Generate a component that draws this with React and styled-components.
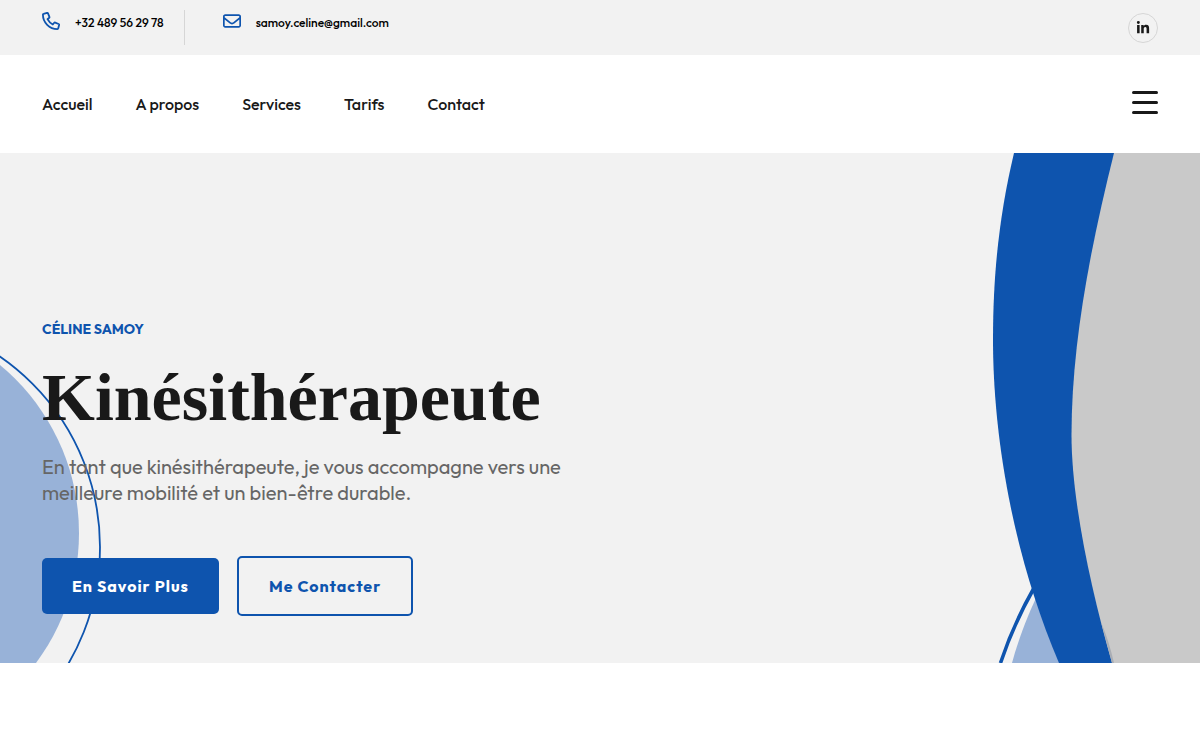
import styled, { createGlobalStyle, ThemeProvider } from 'styled-components';
import { FaLinkedinIn, FaRegEnvelope } from 'react-icons/fa6';

const theme = {
  colors: {
    primary: '#0e54ae',
    primaryLight: '#98b2d8',
    background: '#f2f2f2',
    text: '#191919',
    secondary: '#666666',
    border: '#d6d6d6',
    image: '#c9c9c9',
  },
};

const GlobalStyle = createGlobalStyle`
  * {
    box-sizing: border-box;
  }

  body {
    margin: 0;
    background-color: #ffffff;
    font-family: 'Outfit', 'Lato', sans-serif;
    color: ${theme.colors.text};
  }

  a {
    color: inherit;
    text-decoration: none;
  }
`;

const TopBar = styled.div`
  display: flex;
  justify-content: space-between;
  align-items: center;
  height: 55px;
  padding: 0 42px;
  background-color: ${({ theme }) => theme.colors.background};
`;

const ContactList = styled.ul`
  display: flex;
  list-style: none;
  margin: 0;
  padding: 0;
`;

const ContactItem = styled.li`
  height: 35px;
  padding-top: 2px;
  padding-right: 20px;

  & + & {
    padding-left: 38px;
    border-left: 1px solid ${({ theme }) => theme.colors.border};
  }
`;

const ContactLink = styled.a`
  display: flex;
  align-items: flex-start;
  gap: 15px;
  font-size: 12px;
  font-weight: 500;
  line-height: 22px;
  color: #000000;

  svg {
    color: ${({ theme }) => theme.colors.primary};
  }
`;

const SocialLink = styled.a`
  display: flex;
  align-items: center;
  justify-content: center;
  width: 30px;
  height: 30px;
  border: 1px solid ${({ theme }) => theme.colors.border};
  border-radius: 50%;
`;

const Header = styled.header`
  display: flex;
  justify-content: space-between;
  align-items: center;
  height: 98px;
  padding: 0 42px;
`;

const NavList = styled.ul`
  display: flex;
  gap: 43px;
  list-style: none;
  margin: 0;
  padding: 0;
`;

const NavLink = styled.a`
  font-size: 16px;
  font-weight: 500;
  line-height: 24px;
`;

const MenuButton = styled.button`
  display: flex;
  flex-direction: column;
  gap: 7px;
  width: 26px;
  padding: 0 0 4px;
  border: none;
  background: none;
  cursor: pointer;
`;

const MenuLine = styled.span`
  height: 3px;
  border-radius: 2px;
  background-color: ${({ theme }) => theme.colors.text};
`;

const Hero = styled.section`
  position: relative;
  overflow: hidden;
  padding: 166px 42px 47px;
  background-color: ${({ theme }) => theme.colors.background};
`;

const Shape = styled.svg`
  position: absolute;
  bottom: 0;
  ${({ $side }) => $side}: 0;
`;

const HeroContent = styled.div`
  position: relative;
  max-width: 560px;
`;

const SubTitle = styled.p`
  margin: 0;
  font-size: 14px;
  font-weight: 700;
  line-height: 20px;
  text-transform: uppercase;
  color: ${({ theme }) => theme.colors.primary};
`;

const Title = styled.h1`
  margin: 20px 0 18px;
  font-family: 'Liberation Serif', serif;
  font-size: 68px;
  font-weight: 700;
  line-height: 77px;
`;

const Description = styled.p`
  margin: 0;
  font-size: 20px;
  line-height: 26px;
  color: ${({ theme }) => theme.colors.secondary};
`;

const Actions = styled.div`
  display: flex;
  align-items: center;
  gap: 18px;
  margin-top: 50px;
`;

const Button = styled.button`
  padding: 16px 30px;
  border: ${({ $outline, theme }) =>
    $outline ? `2px solid ${theme.colors.primary}` : 'none'};
  border-radius: 5px;
  background-color: ${({ $outline, theme }) =>
    $outline ? 'transparent' : theme.colors.primary};
  color: ${({ $outline, theme }) => ($outline ? theme.colors.primary : '#ffffff')};
  font-family: inherit;
  font-size: 16px;
  font-weight: 700;
  line-height: 24px;
  letter-spacing: 1px;
  cursor: pointer;
`;

const PhoneIcon = () => (
  <svg width="18" height="18" viewBox="0 0 18 18" fill="none" stroke="currentColor" strokeWidth="1.8" strokeLinejoin="round">
    <path d="M1.6 1.8 5 .9a.9.9 0 0 1 1 .5l1.4 3.4a.9.9 0 0 1-.2 1L5.5 7.2a12.5 12.5 0 0 0 5.3 5.3l1.4-1.7a.9.9 0 0 1 1-.2l3.4 1.4a.9.9 0 0 1 .5 1l-.9 3.4a.9.9 0 0 1-.8.7A14.5 14.5 0 0 1 .9 2.6a.9.9 0 0 1 .7-.8Z" />
  </svg>
);

const navItems = [
  { id: 'accueil', label: 'Accueil' },
  { id: 'a-propos', label: 'A propos' },
  { id: 'services', label: 'Services' },
  { id: 'tarifs', label: 'Tarifs' },
  { id: 'contact', label: 'Contact' },
];

const LeftShape = () => (
  <Shape $side="left" width="110" height="510" viewBox="0 153 110 510" aria-hidden="true">
    <circle cx="-139" cy="533" r="218" fill={theme.colors.primaryLight} />
    <circle cx="-131" cy="547" r="231" fill="none" stroke={theme.colors.primary} strokeWidth="1.8" />
  </Shape>
);

const RightShape = () => (
  <Shape $side="right" width="220" height="510" viewBox="980 153 220 510" aria-hidden="true">
    <path d="M1012 663Q1021 630 1036 598L1070 663Z" fill={theme.colors.primaryLight} />
    <path d="M1000.5 663Q1013 625 1034 588" fill="none" stroke={theme.colors.primary} strokeWidth="3.6" />
    <path
      d="M1014 153C1000 212 993 270 993 340C993 428 1010 548 1059 663H1125V153Z"
      fill={theme.colors.primary}
    />
    <path
      d="M1114 153C1088 257 1071.5 350 1071.5 435C1071.5 500 1091 590 1112 663H1200V153Z"
      fill={theme.colors.image}
    />
    <path d="M1101 622Q1109 641 1114 663H1112Z" fill="#a9adb4" />
  </Shape>
);

export default function App() {
  return (
    <ThemeProvider theme={theme}>
      <GlobalStyle />
      <TopBar>
        <ContactList>
          <ContactItem>
            <ContactLink href="tel:+32489562978">
              <PhoneIcon />
              +32 489 56 29 78
            </ContactLink>
          </ContactItem>
          <ContactItem>
            <ContactLink href="mailto:samoy.celine@gmail.com">
              <FaRegEnvelope size={18} />
              samoy.celine@gmail.com
            </ContactLink>
          </ContactItem>
        </ContactList>
        <SocialLink href="#linkedin" aria-label="LinkedIn">
          <FaLinkedinIn size={14} />
        </SocialLink>
      </TopBar>

      <Header>
        <nav>
          <NavList>
            {navItems.map(item => (
              <li key={item.id}>
                <NavLink href={`#${item.id}`}>{item.label}</NavLink>
              </li>
            ))}
          </NavList>
        </nav>
        <MenuButton type="button" aria-label="Menu">
          <MenuLine />
          <MenuLine />
          <MenuLine />
        </MenuButton>
      </Header>

      <Hero>
        <LeftShape />
        <RightShape />
        <HeroContent>
          <SubTitle>Céline Samoy</SubTitle>
          <Title>Kinésithérapeute</Title>
          <Description>
            En tant que kinésithérapeute, je vous accompagne vers une
            meilleure mobilité et un bien-être durable.
          </Description>
          <Actions>
            <Button type="button">En Savoir Plus</Button>
            <Button type="button" $outline>Me Contacter</Button>
          </Actions>
        </HeroContent>
      </Hero>
    </ThemeProvider>
  );
}
